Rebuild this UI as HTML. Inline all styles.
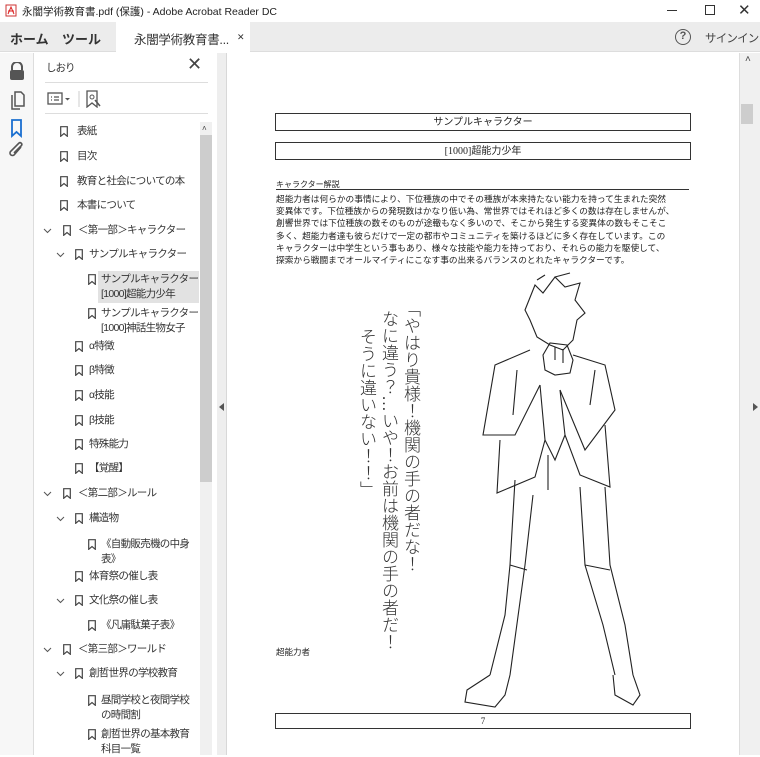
<!DOCTYPE html>
<html><head><meta charset="utf-8"><style>
*{margin:0;padding:0;box-sizing:border-box}
body{width:760px;height:755px;overflow:hidden;background:#fff;position:relative;font-family:"Liberation Sans","Noto Sans CJK JP",sans-serif;color:#222}
.a{position:absolute}
.it{position:absolute;font-size:10.5px;letter-spacing:-0.7px;color:#333;line-height:15px;white-space:nowrap}
.bm{position:absolute;width:8px;height:11px}
.doc{font-family:"Liberation Serif","Noto Sans CJK JP",sans-serif}
.vt{position:absolute;writing-mode:vertical-rl;font-size:17px;line-height:22px;color:#333;white-space:nowrap;font-family:'Liberation Sans','Noto Sans CJK JP',sans-serif;font-weight:300}
</style></head><body>
<div class="a" style="left:0;top:0;width:760px;height:22px;background:#fff"></div>
<svg class="a" style="left:5px;top:4px" width="12" height="13"><rect x="1" y="1" width="10" height="11" fill="#fff" stroke="#c33"/><path d="M3 10 L6 3 L9 10 M3 7 H9" stroke="#d22" fill="none"/></svg>
<div class="a" style="left:22px;top:4px;font-size:10.5px;color:#222;white-space:nowrap">永闇学術教育書.pdf (保護) - Adobe Acrobat Reader DC</div>
<div class="a" style="left:667px;top:10px;width:10px;height:1px;background:#333"></div>
<div class="a" style="left:705px;top:5px;width:10px;height:10px;border:1px solid #333"></div>
<div class="a" style="left:738px;top:1px;font-size:15px;color:#333">✕</div>
<div class="a" style="left:0;top:22px;width:760px;height:30px;background:#ececec;border-bottom:1px solid #ddd"></div>
<div class="a" style="left:10px;top:29px;font-size:13px;font-weight:bold;color:#333;white-space:nowrap">ホーム</div>
<div class="a" style="left:62px;top:29px;font-size:13px;font-weight:bold;color:#333;white-space:nowrap">ツール</div>
<div class="a" style="left:116px;top:22px;width:134px;height:31px;background:#fff"></div>
<div class="a" style="left:134px;top:29px;font-size:12.5px;color:#333;white-space:nowrap;letter-spacing:-0.3px">永闇学術教育書...</div>
<div class="a" style="left:237px;top:32px;font-size:9px;color:#333">✕</div>
<div class="a" style="left:675px;top:29px;width:16px;height:16px;border:1.5px solid #555;border-radius:50%;font-size:11px;text-align:center;line-height:13px;color:#555;font-weight:bold">?</div>
<div class="a" style="left:705px;top:30px;font-size:11.5px;color:#444;white-space:nowrap;letter-spacing:-0.8px">サインイン</div>
<div class="a" style="left:0;top:53px;width:34px;height:702px;background:#f7f7f7;border-right:1px solid #ddd"></div>
<svg class="a" style="left:8px;top:62px" width="18" height="100">
<path d="M4 8 V5 a5 5 0 0 1 10 0 V8" stroke="#555" stroke-width="2" fill="none"/><rect x="2" y="8" width="14" height="10" rx="2" fill="#555"/>
<path d="M4 33 V47 H12 M7 30 H13 L16 33 V44 H7 Z" stroke="#555" stroke-width="1.5" fill="none"/>
<path d="M4 58 H13 V74 L8.5 70 L4 74 Z" stroke="#1a6fd0" stroke-width="1.8" fill="none"/>
<path d="M13 85 L6 93 a2.5 2.5 0 0 1 -3.5 -3.5 L11 81 a1.8 1.8 0 0 1 2.5 2.5 L6 91" stroke="#555" stroke-width="1.6" fill="none"/>
</svg>
<div class="a" style="left:35px;top:53px;width:182px;height:702px;background:#fff"></div>
<div class="a" style="left:46px;top:60px;font-size:10.5px;color:#333;letter-spacing:-1px">しおり</div>
<div class="a" style="left:187px;top:54px;font-size:18px;color:#444">✕</div>
<div class="a" style="left:45px;top:82px;width:163px;height:1px;background:#ddd"></div>
<svg class="a" style="left:46px;top:90px" width="60" height="18"><rect x="2" y="3" width="14" height="11" fill="none" stroke="#555" stroke-width="1.3"/><path d="M5 7h1M5 10h1M8 7h5M8 10h5" stroke="#555" stroke-width="1.3"/><path d="M19 8l2.5 2.5L24 8z" fill="#555"/><line x1="33" y1="1" x2="33" y2="17" stroke="#ccc"/><path d="M41 1h10v16l-5-4-5 4z" fill="none" stroke="#555" stroke-width="1.3"/><circle cx="46" cy="7" r="2" fill="none" stroke="#555"/><path d="M49 10l5 6" stroke="#555" stroke-width="1.5"/></svg>
<div class="a" style="left:45px;top:113px;width:163px;height:1px;background:#ddd"></div>
<div class="a" style="left:200px;top:122px;width:12px;height:633px;background:#f0f0f0"></div>
<div class="a" style="left:202px;top:124px;font-size:8px;color:#444">˄</div>
<div class="a" style="left:200px;top:135px;width:12px;height:347px;background:#cdcdcd"></div>
<div class="a" style="left:98px;top:271px;width:101px;height:32px;background:#e2e2e2"></div>
<div id="bms"></div>
<div class="a" style="left:217px;top:53px;width:10px;height:702px;background:#eeeeee;border-right:1px solid #d8d8d8"></div>
<div class="a" style="left:219px;top:403px;width:0;height:0;border-top:4px solid transparent;border-bottom:4px solid transparent;border-right:5px solid #555"></div>
<div class="a" style="left:739px;top:53px;width:21px;height:702px;background:#f0f0f0;border-left:1px solid #ddd"></div>
<div class="a" style="left:745px;top:54px;font-size:10px;color:#444">˄</div>
<div class="a" style="left:741px;top:104px;width:12px;height:20px;background:#cdcdcd"></div>
<div class="a" style="left:753px;top:403px;width:0;height:0;border-top:4px solid transparent;border-bottom:4px solid transparent;border-left:5px solid #555"></div>
<div class="a doc" style="left:275px;top:113px;width:416px;height:18px;border:1px solid #333;font-size:10px;text-align:center;line-height:17px">サンプルキャラクター</div>
<div class="a doc" style="left:275px;top:142px;width:416px;height:18px;border:1px solid #333;font-size:10px;text-align:center;line-height:17px">[1000]超能力少年</div>
<div class="a doc" style="left:276px;top:179px;font-size:8px">キャラクター解説</div>
<div class="a" style="left:276px;top:189px;width:413px;height:1px;background:#333"></div>
<div class="a doc" style="left:276px;top:193px;width:420px;font-size:8.7px;line-height:12.2px;white-space:nowrap">超能力者は何らかの事情により、下位種族の中でその種族が本来持たない能力を持って生まれた突然<br>変異体です。下位種族からの発現数はかなり低い為、常世界ではそれほど多くの数は存在しませんが、<br>創響世界では下位種族の数そのものが途轍もなく多いので、そこから発生する変異体の数もそこそこ<br>多く、超能力者達も彼らだけで一定の都市やコミュニティを築けるほどに多く存在しています。この<br>キャラクターは中学生という事もあり、様々な技能や能力を持っており、それらの能力を駆使して、<br>探索から戦闘までオールマイティにこなす事の出来るバランスのとれたキャラクターです。</div>
<div class="vt" style="left:399px;top:300px">「やはり貴様！機関の手の者だな！</div>
<div class="vt" style="left:377px;top:310px">なに違う？…いや！お前は機関の手の者だ！</div>
<div class="vt" style="left:355px;top:328px">そうに違いない！！」</div>
<div class="a doc" style="left:276px;top:646px;font-size:8.5px">超能力者</div>
<div class="a doc" style="left:275px;top:713px;width:416px;height:16px;border:1px solid #333;font-size:9px;text-align:center;line-height:14px">7</div>
<svg class="a" style="left:455px;top:265px" width="200" height="445" fill="none" stroke="#222" stroke-width="1.1">
<path d="M70 45 L80 20 L88 28 L100 12 L110 22 L125 18 L120 35 L130 48 L122 55 L118 75 L108 85 L95 80 L82 72 L75 55 Z"/>
<path d="M82 15 L90 10 M100 12 L115 8"/>
<path d="M88 90 L95 78 L112 80 L118 95 L115 108 L100 110 L90 105 Z"/>
<path d="M100 82 V95 M108 84 V98"/>
<path d="M75 85 L40 100 L28 170 L60 170 L85 120 M118 90 L150 100 L160 145 L130 185 L105 125"/>
<path d="M62 105 L58 150 M140 105 L135 140"/>
<path d="M85 120 L90 175 L80 212 L42 228 L45 175 M105 125 L110 170 L125 210 L155 222 L150 160"/>
<path d="M90 175 L100 195 L110 170 M93 190 V225"/>
<path d="M60 215 L55 300 L50 350 L35 410 M78 230 L70 300 L55 410"/>
<path d="M125 222 L130 300 L148 360 L160 410 M150 222 L155 300 L170 360 L178 410"/>
<path d="M55 300 L72 305 M130 300 L155 305"/>
<path d="M35 410 L12 425 L10 437 L40 442 L50 430 L55 410 M158 410 L160 430 L178 440 L185 430 L178 410"/>
</svg>
<script>
var d=[["表紙",132,0],["目次",157,0],["教育と社会についての本",182,0],["本書について",206,0],["＜第一部＞キャラクター",231,1,1],["サンプルキャラクター",255,2,1],["サンプルキャラクター<br>[1000]超能力少年",272,3],["サンプルキャラクター<br>[1000]神話生物女子",306,3],["α特徴",347,2],["β特徴",371,2],["α技能",396,2],["β技能",421,2],["特殊能力",445,2],["【覚醒】",469,2],["＜第二部＞ルール",494,1,1],["構造物",519,2,1],["《自動販売機の中身<br>表》",537,3],["体育祭の催し表",577,2],["文化祭の催し表",601,2,1],["《凡庸駄菓子表》",626,3],["＜第三部＞ワールド",650,1,1],["創哲世界の学校教育",674,2,1],["昼間学校と夜間学校<br>の時間割",693,3],["創哲世界の基本教育<br>科目一覧",727,3]];
var ix=[60,63,75,88],tx=[77,78,89,101],cx=[0,43,56,0],h="";
d.forEach(function(e){var l=e[2],two=e[0].indexOf("<br>")>0,y=two?e[1]:e[1]-8;
h+='<svg class="bm" style="left:'+ix[l]+'px;top:'+(y+2)+'px" viewBox="0 0 8 11"><path d="M0.7 0.7H7.3V10.3L4 7.5L0.7 10.3Z" fill="none" stroke="#444" stroke-width="1.2"/></svg>';
h+='<div class="it" style="left:'+tx[l]+'px;top:'+y+'px">'+e[0]+'</div>';
if(e[3])h+='<svg class="a" style="left:'+cx[l]+'px;top:'+(y+5)+'px" width="9" height="6"><path d="M1 1L4.5 4.5L8 1" stroke="#555" fill="none"/></svg>';});
document.getElementById("bms").innerHTML=h;
</script>
</body></html>
